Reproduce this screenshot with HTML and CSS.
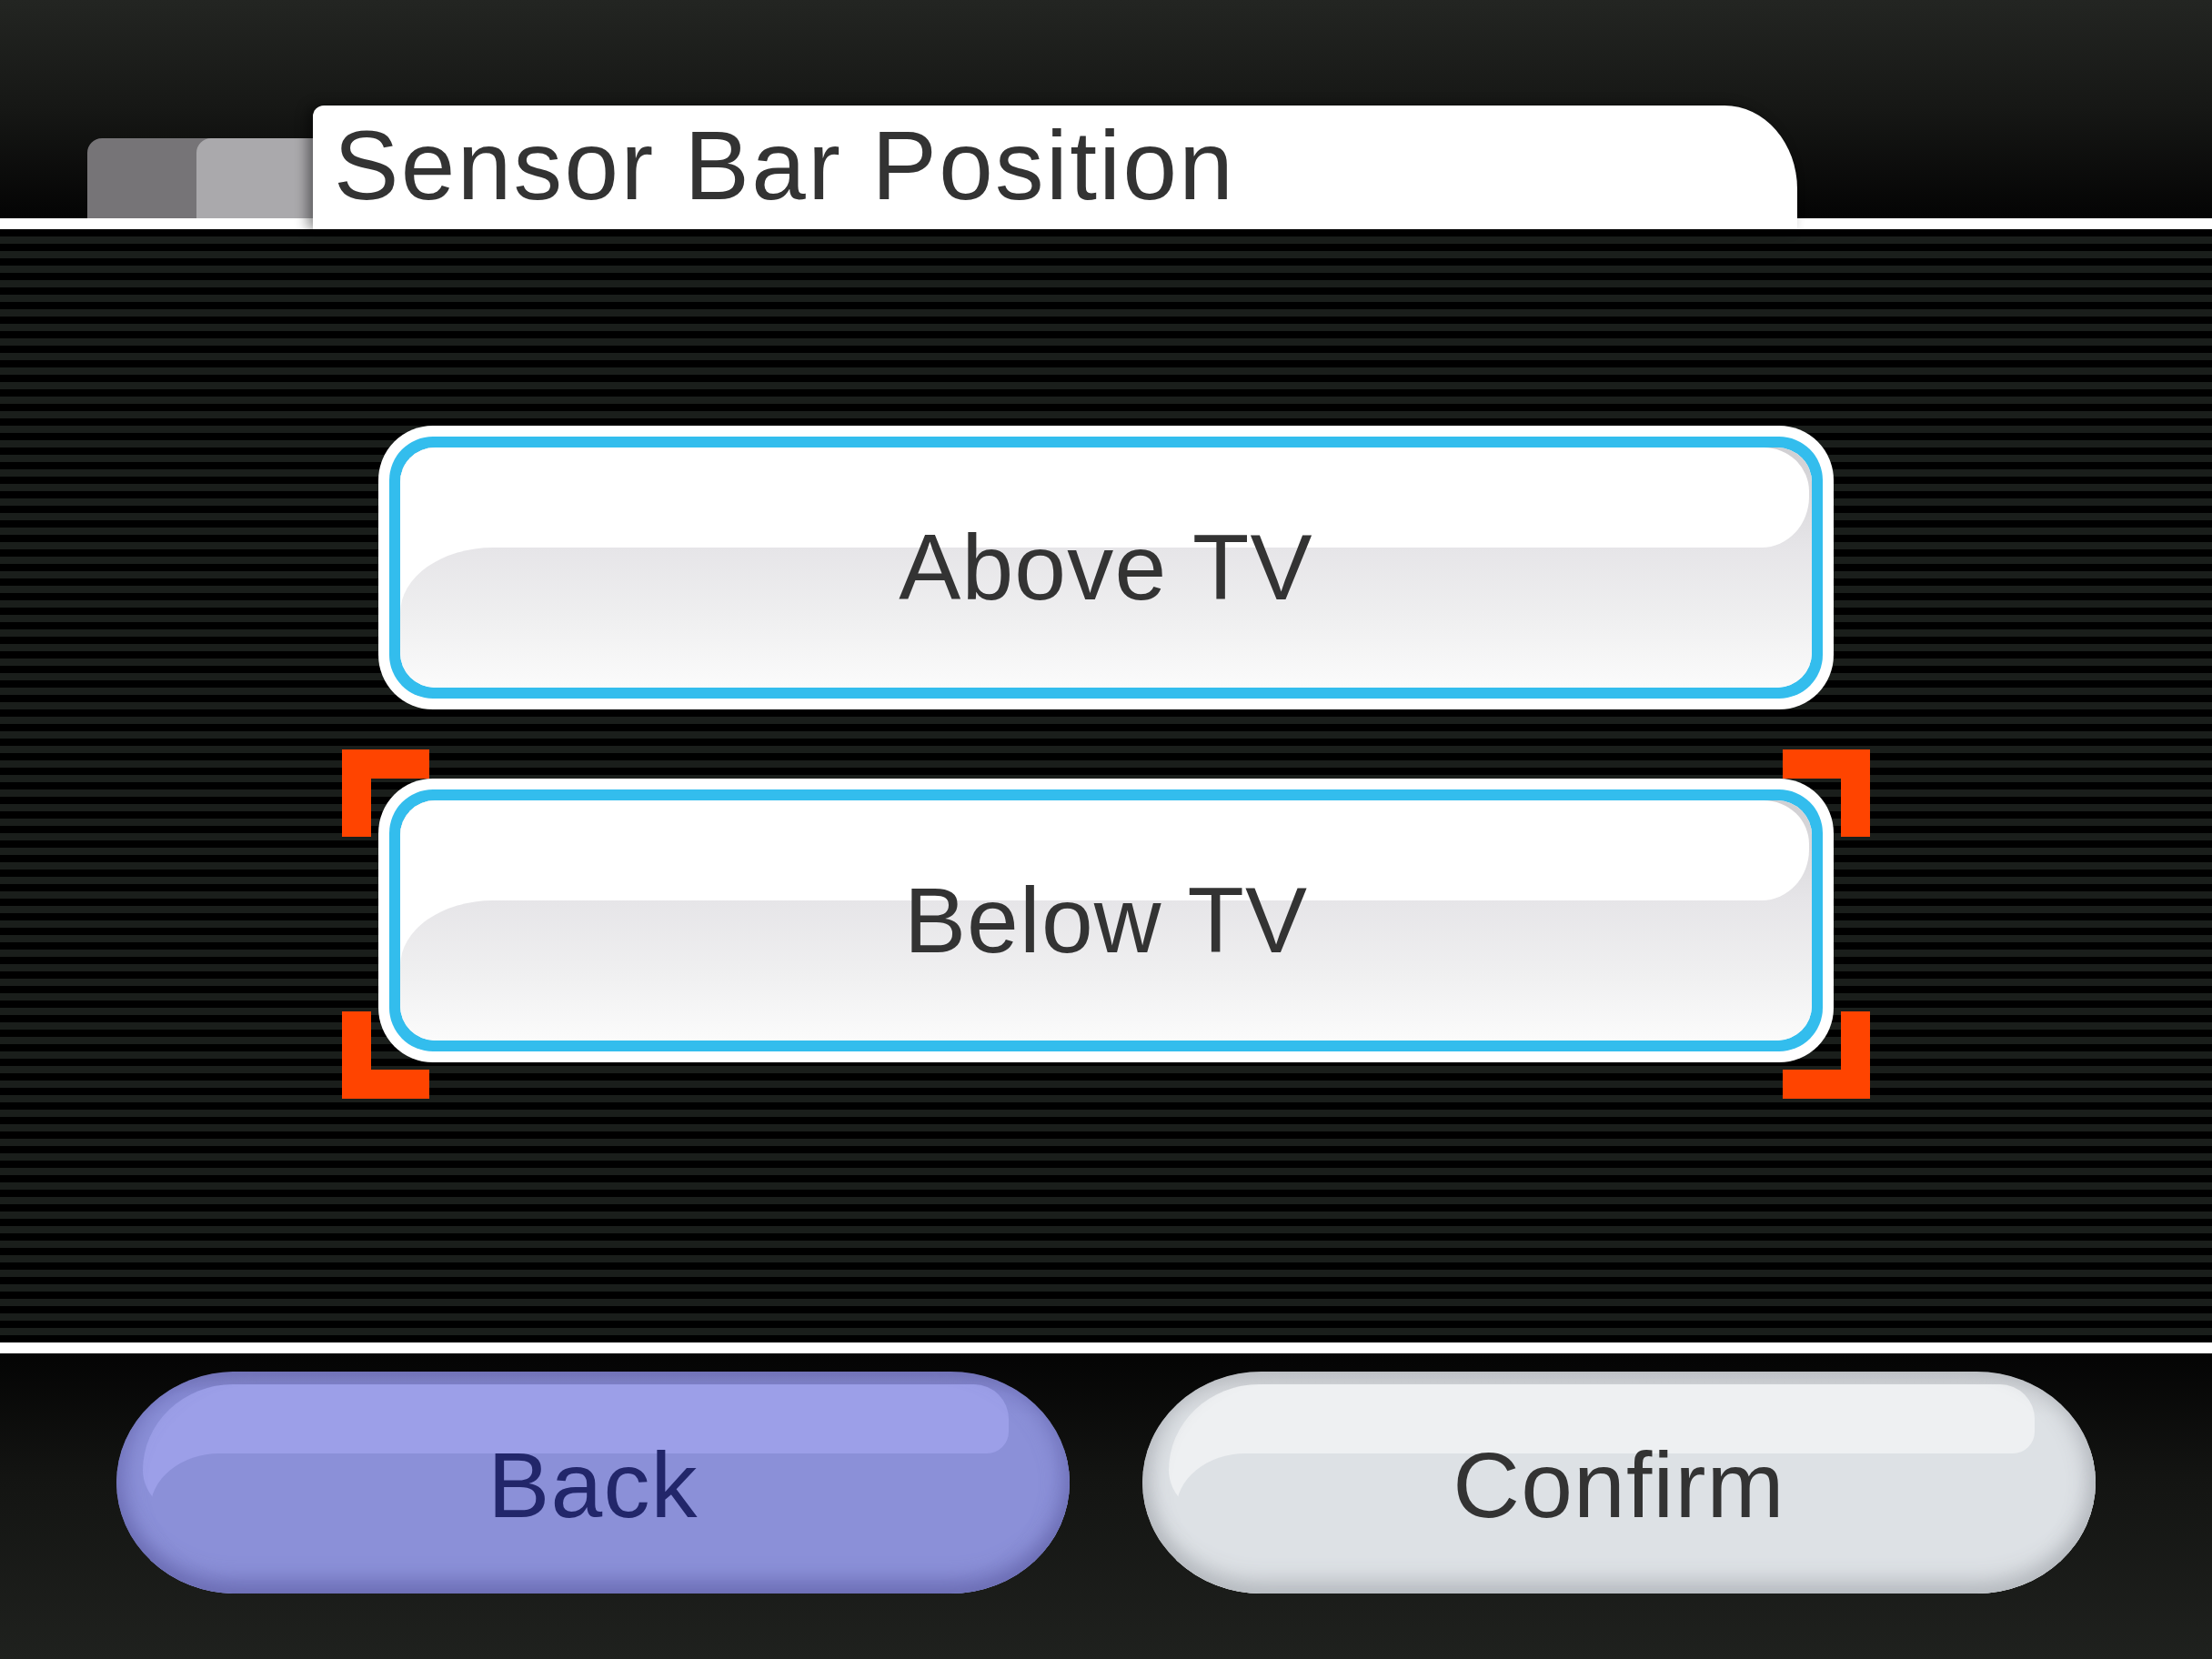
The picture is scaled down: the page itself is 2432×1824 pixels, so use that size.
FILE: index.html
```html
<!DOCTYPE html>
<html lang="en">
<head>
<meta charset="utf-8">
<title>Sensor Bar Position</title>
<link rel="stylesheet" href="styles.css">
</head>
<body>
<div class="screen">
  <header class="header">
    <div class="tab tab-a"></div>
    <div class="tab tab-b"></div>
    <div class="title-tab"><h1 class="title">Sensor Bar Position</h1></div>
  </header>
  <div class="rule"></div>
  <main class="options">
    <div class="option">
      <div class="option-ring">
        <div class="option-face">
          <div class="face-hl"><div class="face-hl-white"></div></div>
          <div class="face-body"></div>
          <span class="option-label">Above TV</span>
        </div>
      </div>
    </div>
    <div class="option-wrap">
      <span class="corner corner-tl"></span>
      <span class="corner corner-tr"></span>
      <span class="corner corner-bl"></span>
      <span class="corner corner-br"></span>
      <div class="option">
        <div class="option-ring">
          <div class="option-face">
            <div class="face-hl"><div class="face-hl-white"></div></div>
            <div class="face-body"></div>
            <span class="option-label">Below TV</span>
          </div>
        </div>
      </div>
    </div>
  </main>
  <div class="rule"></div>
  <footer class="footer">
    <div class="pill pill-back">
      <span class="pill-hl-top"></span>
      <span class="pill-hl-left"></span>
      <span class="pill-body"></span>
      <span class="pill-shade"></span>
      <span class="pill-label">Back</span>
    </div>
    <div class="pill pill-confirm">
      <span class="pill-hl-top"></span>
      <span class="pill-hl-left"></span>
      <span class="pill-body"></span>
      <span class="pill-shade"></span>
      <span class="pill-label">Confirm</span>
    </div>
  </footer>
</div>
</body>
</html>
```

FILE: styles.css
```css
* { box-sizing: border-box; }
html, body { margin: 0; padding: 0; }
body {
  width: 2432px;
  height: 1824px;
  overflow: hidden;
  background: #000;
  font-family: "Liberation Sans", Arial, sans-serif;
}
.screen {
  width: 2432px;
  height: 1824px;
  display: flex;
  flex-direction: column;
}

/* header */
.header {
  flex: none;
  height: 240px;
  display: flex;
  align-items: flex-end;
  padding-left: 96px;
  background: linear-gradient(180deg, #232522 0%, #161715 50%, #040404 100%);
}
.tab {
  height: 88px;
  border-radius: 16px 0 0 0;
}
.tab-a { width: 136px; background: #767477; }
.tab-b { width: 144px; margin-left: -16px; background: #aaa9ac; }
.title-tab {
  position: relative;
  z-index: 2;
  width: 1632px;
  height: 136px;
  margin-left: -16px;
  margin-bottom: -12px;
  padding: 13px 0 0 23px;
  background: #fff;
  border-radius: 12px 80px 0 0 / 12px 92px 0 0;
  box-shadow: -6px 0 14px rgba(0, 0, 0, 0.45);
}
.title {
  margin: 0;
  font-weight: 400;
  font-size: 107px;
  line-height: 1;
  letter-spacing: 2.4px;
  color: #333;
  white-space: nowrap;
}

.rule {
  flex: none;
  height: 12px;
  background: #fff;
}

/* options */
.options {
  flex: none;
  height: 1224px;
  display: flex;
  flex-direction: column;
  align-items: center;
  gap: 76px;
  padding-top: 216px;
  background: repeating-linear-gradient(180deg, #000 0 8px, #1a1e1b 8px 16px);
}
.option {
  width: 1600px;
  height: 312px;
  padding: 12px;
  background: #fff;
  border-radius: 60px;
}
.option-ring {
  height: 100%;
  padding: 12px;
  background: #33bded;
  border-radius: 48px;
}
.option-face {
  position: relative;
  height: 100%;
  border-radius: 38px;
  overflow: hidden;
  background: #fff;
  display: flex;
  align-items: center;
  justify-content: center;
}
.face-hl {
  position: absolute;
  top: 0;
  left: 0;
  right: 0;
  height: 110px;
  background: linear-gradient(180deg, #d0cfd2 0%, #e6e5e8 100%);
}
.face-hl-white {
  height: 100%;
  width: calc(100% - 3px);
  background: #fff;
  border-radius: 0 50px 52px 0 / 0 48px 56px 0;
}
.face-body {
  position: absolute;
  top: 110px;
  left: 0;
  right: 0;
  bottom: 0;
  background: linear-gradient(180deg, #e6e5e8 0%, #efeff0 50%, #fbfbfb 100%);
  border-top-left-radius: 102px 72px;
}
.option-label {
  position: relative;
  font-size: 102px;
  line-height: 1;
  letter-spacing: 1.2px;
  color: #333;
}

.option-wrap { position: relative; }
.corner {
  position: absolute;
  width: 96px;
  height: 96px;
  border: 0 solid #ff4400;
}
.corner-tl { top: -32px; left: -40px; border-top-width: 32px; border-left-width: 32px; }
.corner-tr { top: -32px; right: -40px; border-top-width: 32px; border-right-width: 32px; }
.corner-bl { bottom: -40px; left: -40px; border-bottom-width: 32px; border-left-width: 32px; }
.corner-br { bottom: -40px; right: -40px; border-bottom-width: 32px; border-right-width: 32px; }

/* footer */
.footer {
  flex: 1;
  display: flex;
  justify-content: center;
  align-items: flex-start;
  gap: 80px;
  padding-top: 20px;
  background: linear-gradient(180deg, #040404 0%, #131412 40%, #1f211e 100%);
}
.pill {
  position: relative;
  width: 1048px;
  height: 244px;
  border-radius: 131px / 122px;
  overflow: hidden;
  display: flex;
  align-items: center;
  justify-content: center;
  padding-top: 6px;
}
.pill-hl-top {
  position: absolute;
  top: 14px;
  left: 129px;
  width: 852px;
  height: 76px;
  border-radius: 0 38px 24px 0 / 0 38px 24px 0;
}
.pill-hl-left {
  position: absolute;
  top: 14px;
  left: 29px;
  width: 130px;
  height: 146px;
  border-radius: 100px 0 0 60px / 95px 0 0 52px;
}
.pill-body {
  position: absolute;
  top: 90px;
  left: 37px;
  right: 0;
  bottom: 0;
  border-top-left-radius: 76px 62px;
}
.pill-shade {
  position: absolute;
  top: 0;
  left: 0;
  right: 0;
  bottom: 0;
  border-radius: inherit;
}
.pill-label {
  position: relative;
  z-index: 2;
  font-size: 102px;
  line-height: 1;
  letter-spacing: 1.2px;
}

.pill-back {
  background: linear-gradient(180deg, #7576b9 0%, #8589d2 10%, #8b90d8 20%, #8b90d8 100%);
}
.pill-back .pill-hl-top,
.pill-back .pill-hl-left { background: #9c9fe8; }
.pill-back .pill-body { background: #8b90d8; }
.pill-back .pill-shade {
  box-shadow: inset 0 -24px 22px -10px rgba(104, 106, 176, 0.85),
              inset 20px 0 22px -12px rgba(104, 106, 176, 0.7),
              inset -20px 0 22px -12px rgba(104, 106, 176, 0.7);
}
.pill-back .pill-label { color: #22266a; }

.pill-confirm {
  background: linear-gradient(180deg, #c2c5c9 0%, #d4d7db 10%, #dde1e5 20%, #dde1e5 100%);
}
.pill-confirm .pill-hl-top,
.pill-confirm .pill-hl-left { background: #eef0f2; }
.pill-confirm .pill-body { background: #dde1e5; }
.pill-confirm .pill-shade {
  box-shadow: inset 0 -24px 22px -10px rgba(180, 184, 190, 0.9),
              inset 20px 0 22px -12px rgba(170, 174, 180, 0.8),
              inset -20px 0 22px -12px rgba(170, 174, 180, 0.8);
}
.pill-confirm .pill-label { color: #333; }
```
